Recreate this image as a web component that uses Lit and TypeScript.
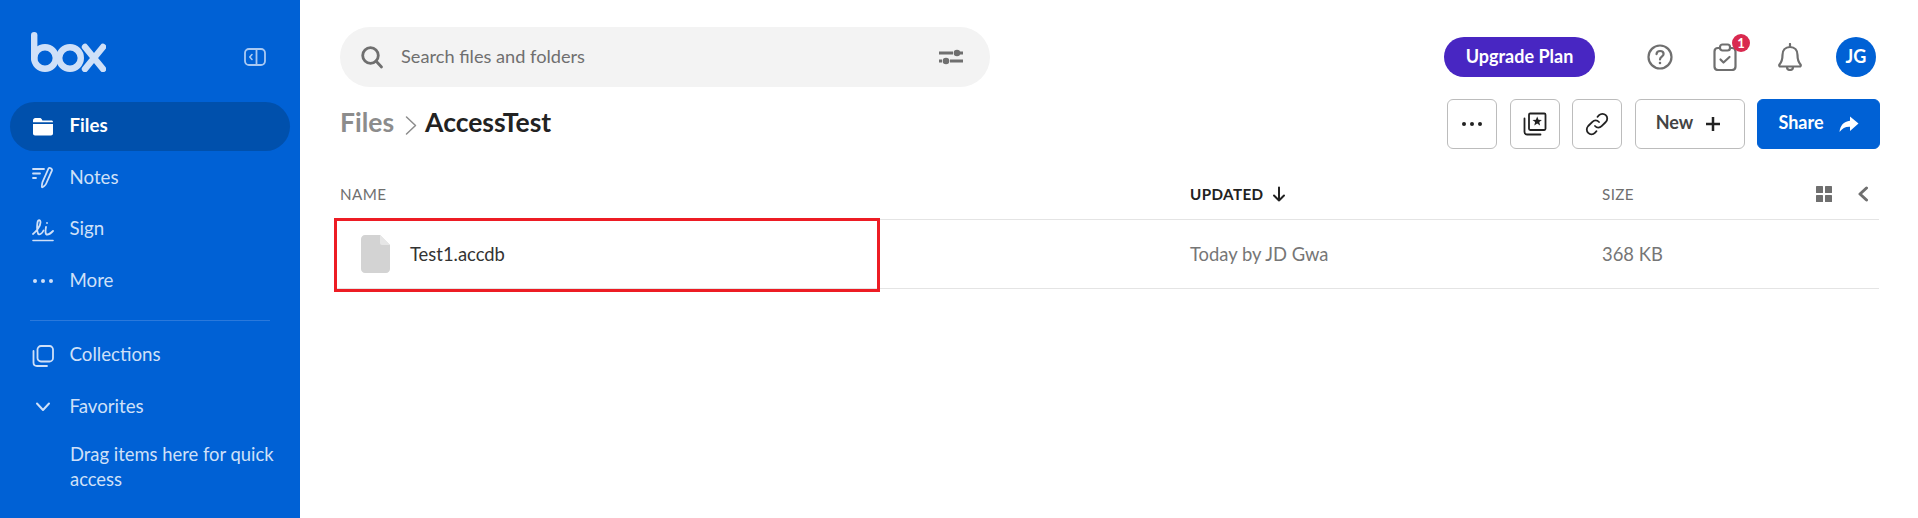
import { LitElement, html, css, svg } from 'lit';
import { customElement } from 'lit/decorators.js';

const icon = (w: number, h: number, body: unknown, cls = '') => html`
  <svg class=${cls} width=${w} height=${h} viewBox="0 0 ${w} ${h}" fill="none" stroke="currentColor"
    stroke-width="1.8" stroke-linecap="round" stroke-linejoin="round">${body}</svg>`;

const navIcons: Record<string, unknown> = {
  files: icon(22, 20, svg`<path stroke="none" fill="currentColor" d="M1 5.2V3.4C1 2 2 1 3.4 1h4.2c1 0 1.6.4 2.2 1.3l.6 1.1H19.4c1 0 1.6.7 1.6 1.6v.3H1zM1 7h20v9.4c0 1.2-.9 2-2 2H3c-1.1 0-2-.8-2-2V7z"/>`),
  notes: icon(22, 24, svg`<path d="M1 3h11M1 7.5h7M1 12h3"/><path d="M16.5 2.5c1-1.3 4.2.2 3.5 1.9l-6 13.6c-.3.7-3.4 3.8-4 3.2-.5-.5.3-4.6.6-5.4z"/>`),
  sign: icon(22, 24, svg`<path d="M1 16C4 14 8.500 8 8.500 4.500 8.500 1.500 6 1.500 5.500 4.500 5 8 5 13 6 15.500 7 17.500 10 16 11.500 12.500"/><path d="M14 9C13.500 12 13 14 14 16 15 17 18 16 21 13"/><path d="M15 5h.01"/><path d="M1 22.500h20" stroke-width="1.600"/>`),
  more: icon(22, 6, svg`<g stroke="none" fill="currentColor"><circle cx="3" cy="3" r="2"/><circle cx="11" cy="3" r="2"/><circle cx="19" cy="3" r="2"/></g>`),
  collections: icon(22, 22, svg`<rect x="5.500" y="1" width="15.500" height="15.500" rx="3.500"/><path d="M1.500 6v11.500C1.500 19.500 3 21 5 21h10"/>`),
  favorites: icon(22, 12, svg`<path d="M5 2.500l6 6.500 6-6.500" stroke-width="2"/>`),
};

@customElement('app-root')
export class AppRoot extends LitElement {
  static styles = css`
    :host {
      display: flex;
      width: 1918px;
      height: 518px;
      overflow: hidden;
      background: #fff;
      font-family: Lato, 'Noto Sans', sans-serif;
      color: #222;
    }
    .sidebar {
      width: 300px;
      flex: none;
      background: #0061d5;
      color: #cfe0f8;
      display: flex;
      flex-direction: column;
    }
    .brand {
      height: 102px;
      padding: 32px 34px 0 31px;
      box-sizing: border-box;
      display: flex;
      justify-content: space-between;
      align-items: flex-start;
    }
    .collapse { margin-top: 16px; color: #a9c9f2; }
    .nav { display: flex; flex-direction: column; padding: 0 10px; }
    .item {
      height: 50px;
      margin-bottom: 1.500px;
      padding-left: 22px;
      display: flex;
      align-items: center;
      font-size: 18.700px;
      border-radius: 25px;
    }
    .item .label { margin-top: -3px; margin-left: -0.500px; }
    .item .ic { width: 38px; display: flex; align-items: center; flex: none; }
    .item.active { background: #0050ac; color: #fff; font-weight: 700; height: 49px; margin-bottom: 2px; }
    .divider { height: 1px; background: #2a79dc; margin: 12px 20px 10px; }
    .drag { margin: 8px 20px 0 70px; font-size: 18.400px; line-height: 25px; }

    .main { flex: 1; min-width: 0; display: flex; flex-direction: column; }
    .topbar {
      display: flex;
      align-items: center;
      height: 60px;
      margin-top: 27px;
      padding: 0 42px 0 40px;
    }
    .search {
      width: 650px;
      height: 60px;
      box-sizing: border-box;
      padding: 0 26px 0 20px;
      border-radius: 30px;
      background: #f3f3f3;
      color: #6f6f6f;
      display: flex;
      align-items: center;
      font-size: 18.200px;
    }
    .search span { flex: 1; margin: -3px 0 0 17px; }
    .upgrade {
      margin-left: auto;
      width: 151px;
      height: 40px;
      padding-bottom: 3px;
      box-sizing: border-box;
      border-radius: 20px;
      background: #4826c2;
      color: #fff;
      font-weight: 700;
      font-size: 18px;
      display: flex;
      align-items: center;
      justify-content: center;
    }
    .tools { display: flex; gap: 25px; margin-left: 45px; color: #6f6f6f; }
    .tool { width: 40px; height: 40px; display: flex; align-items: center; justify-content: center; position: relative; }
    .badge {
      position: absolute;
      top: -3px;
      left: 27px;
      width: 18px;
      height: 18px;
      border-radius: 50%;
      background: #d9294f;
      color: #fff;
      font-size: 13px;
      font-weight: 700;
      display: flex;
      align-items: center;
      justify-content: center;
    }
    .avatar {
      width: 40px;
      height: 40px;
      margin-left: 26px;
      padding-bottom: 2px;
      box-sizing: border-box;
      border-radius: 50%;
      background: #0061d5;
      color: #fff;
      font-weight: 700;
      font-size: 18px;
      display: flex;
      align-items: center;
      justify-content: center;
    }
    .toolbar {
      display: flex;
      align-items: center;
      height: 50px;
      margin-top: 12px;
      padding: 0 38px 0 40px;
    }
    .crumbs { display: flex; align-items: center; font-size: 26.500px; font-weight: 700; margin-bottom: 4px; }
    .crumbs .root { color: #8c8c8c; }
    .crumbs svg { color: #8c8c8c; margin: 5px 7px 0 10px; }
    .crumbs .current { color: #222; }
    .actions { margin-left: auto; display: flex; gap: 12px; }
    .btn {
      width: 50px;
      height: 50px;
      box-sizing: border-box;
      border: 1px solid #bcbcbc;
      border-radius: 6px;
      color: #222;
      display: flex;
      align-items: center;
      justify-content: center;
      font-size: 18px;
      font-weight: 700;
    }
    .btn .txt { margin-top: -4px; }
    .btn.star { margin-left: 1px; }
    .btn.new { width: 110px; margin-left: 1px; padding-right: 3px; color: #444; gap: 12px; }
    .btn.share { width: 123px; background: #0061d5; border-color: #0061d5; color: #fff; gap: 15px; }

    .table { margin: 0 39px 0 35px; }
    .row {
      display: grid;
      grid-template-columns: 850px 412px 1fr;
      align-items: center;
      padding-left: 5px;
      border-bottom: 1px solid #e4e4e4;
      position: relative;
    }
    .head { height: 71px; padding-top: 20px; color: #6f6f6f; font-size: 15.200px; letter-spacing: .4px; box-sizing: border-box; }
    .sorted { color: #222; font-weight: 700; display: flex; align-items: center; gap: 8px; }
    .size-head { display: flex; align-items: center; }
    .view { margin-left: auto; display: flex; align-items: center; gap: 25px; padding-right: 10px; color: #6f6f6f; }
    .body { height: 69px; font-size: 18.400px; color: #767676; box-sizing: border-box; }
    .name { display: flex; align-items: center; gap: 20px; padding-left: 21px; color: #333; }
    .highlight {
      position: absolute;
      left: -1px;
      top: -2px;
      width: 546px;
      height: 74px;
      box-sizing: border-box;
      border: 3px solid #ed1c24;
    }
  `;

  private navRow(key: string, label: string, active = false) {
    return html`<div class="item ${active ? 'active' : ''}"><span class="ic">${navIcons[key]}</span><span class="label">${label}</span></div>`;
  }

  render() {
    return html`
      <aside class="sidebar">
        <div class="brand">
          ${icon(75, 40, svg`<g stroke-width="6.400"><path d="M3.200 3.200v23"/><circle cx="14" cy="26" r="10.800"/><circle cx="39" cy="26" r="10.800"/><path d="M54 15l18 22M72 15L54 37"/></g>`)}
          ${icon(22, 18, svg`<rect x="1" y="1" width="20" height="16" rx="4"/><path d="M12.500 1v16"/><path d="M8 6.500L5.800 9 8 11.500" stroke-width="1.600"/>`, 'collapse')}
        </div>
        <nav class="nav">
          ${this.navRow('files', 'Files', true)}
          ${this.navRow('notes', 'Notes')}
          ${this.navRow('sign', 'Sign')}
          ${this.navRow('more', 'More')}
          <div class="divider"></div>
          ${this.navRow('collections', 'Collections')}
          ${this.navRow('favorites', 'Favorites')}
        </nav>
        <div class="drag">Drag items here for quick access</div>
      </aside>
      <main class="main">
        <div class="topbar">
          <div class="search">
            ${icon(24, 24, svg`<circle cx="10.500" cy="10.500" r="7.800" stroke-width="2.800"/><path d="M16 16l5.500 6" stroke-width="2.800"/>`)}
            <span>Search files and folders</span>
            ${icon(26, 16, svg`<g stroke-width="2.800" stroke-linecap="butt"><path d="M1 4h14M22 4h3M1 12h3M12 12h13"/></g><g stroke="none" fill="currentColor"><circle cx="19" cy="4" r="3.300"/><circle cx="8" cy="12" r="3.300"/></g>`)}
          </div>
          <div class="upgrade">Upgrade Plan</div>
          <div class="tools">
            <div class="tool">${icon(26, 26, svg`<circle cx="13" cy="13" r="11.500" stroke-width="2.200"/><path d="M9.500 10.200c.2-2 1.700-3.200 3.600-3.200 2 0 3.500 1.300 3.500 3 0 2.800-3.600 2.600-3.600 5.500" stroke-width="2.200"/><circle cx="13" cy="19" r=".6" stroke-width="1.400"/>`)}</div>
            <div class="tool">
              ${icon(24, 28, svg`<g stroke-width="2.200"><path d="M7 5H5c-2 0-3.500 1.500-3.500 3.500v15c0 2 1.500 3.500 3.500 3.500h14c2 0 3.500-1.500 3.500-3.500v-15C22.500 6.500 21 5 19 5h-2"/><rect x="7" y="1.500" width="10" height="6" rx="2.500"/><path d="M7.500 16.500l3 3 6-5.500"/></g>`)}
              <span class="badge">1</span>
            </div>
            <div class="tool">${icon(24, 28, svg`<g stroke-width="2.200"><path d="M12 4c-4.800 0-7.500 3.500-7.500 8 0 5-.8 7-3 9.500-.7 1 0 2 1 2h19c1 0 1.700-1 1-2-2.200-2.500-3-4.500-3-9.500 0-4.500-2.700-8-7.500-8z"/><path d="M12 1v3M9 24c0 2 1.200 3 3 3s3-1 3-3"/></g>`)}</div>
          </div>
          <div class="avatar">JG</div>
        </div>
        <div class="toolbar">
          <div class="crumbs">
            <span class="root">Files</span>
            ${icon(14, 22, svg`<path d="M2.500 3l9 8.500-9 8.500" stroke-width="1.500"/>`)}
            <span class="current">AccessTest</span>
          </div>
          <div class="actions">
            <div class="btn">${icon(22, 6, svg`<g stroke="none" fill="currentColor"><circle cx="3" cy="3" r="2"/><circle cx="11" cy="3" r="2"/><circle cx="19" cy="3" r="2"/></g>`)}</div>
            <div class="btn star">${icon(24, 24, svg`<rect x="6" y="1.500" width="16.500" height="16.500" rx="1.200"/><path d="M1.500 6.500v13.500c0 1.400 1 2.500 2.500 2.500h13.500"/><path stroke="none" fill="currentColor" d="M14.200 4.500l1.300 3.200 3.400.2-2.600 2.200.8 3.300-2.900-1.800-2.900 1.800.8-3.300-2.600-2.200 3.400-.2z"/>`)}</div>
            <div class="btn">${icon(24, 24, svg`<path d="M10 14c2 2.200 4.800 2 6.600.2l4.200-4.200c1.900-2 1.900-5 0-6.800-1.900-1.900-4.800-1.900-6.700 0l-1.600 1.600"/><path d="M14 10c-2-2.200-4.800-2-6.600-.2l-4.200 4.200c-1.900 2-1.900 5 0 6.800 1.900 1.900 4.800 1.900 6.700 0l1.600-1.600"/>`)}</div>
            <div class="btn new"><span class="txt">New</span> ${icon(16, 16, svg`<path d="M8 1v14M1 8h14" stroke-width="2.500" stroke="#222" stroke-linecap="butt"/>`)}</div>
            <div class="btn share"><span class="txt">Share</span> ${icon(20, 16, svg`<path stroke="none" fill="currentColor" d="M11 .5l8.500 7-8.500 7.500v-4.300C6.500 10.500 3.500 12 .5 16c.5-6 4-10.500 10.500-11.200z"/>`)}</div>
          </div>
        </div>
        <div class="table">
          <div class="row head">
            <div>NAME</div>
            <div class="sorted">UPDATED ${icon(14, 16, svg`<path d="M7 1.500v13M2 9.500l5 5 5-5" stroke-width="2"/>`)}</div>
            <div class="size-head">SIZE
              <div class="view">
                ${icon(16, 16, svg`<g stroke="none" fill="currentColor"><rect x="0" y="0" width="7" height="7" rx=".6"/><rect x="9" y="0" width="7" height="7" rx=".6"/><rect x="0" y="9" width="7" height="7" rx=".6"/><rect x="9" y="9" width="7" height="7" rx=".6"/></g>`)}
                ${icon(12, 16, svg`<path d="M9.500 2L3 8l6.500 6" stroke-width="3"/>`)}
              </div>
            </div>
          </div>
          <div class="row body">
            <div class="name">
              <svg width="29" height="38" viewBox="0 0 29 38"><path fill="#d3d3d3" d="M4 0h15l10 10v24c0 2.200-1.800 4-4 4H4c-2.200 0-4-1.800-4-4V4c0-2.200 1.800-4 4-4z"/><path fill="#e6e6e6" d="M19 0l10 10H21c-1.100 0-2-.9-2-2z"/></svg>
              Test1.accdb
            </div>
            <div>Today by JD Gwa</div>
            <div>368 KB</div>
            <div class="highlight"></div>
          </div>
        </div>
      </main>
    `;
  }
}
